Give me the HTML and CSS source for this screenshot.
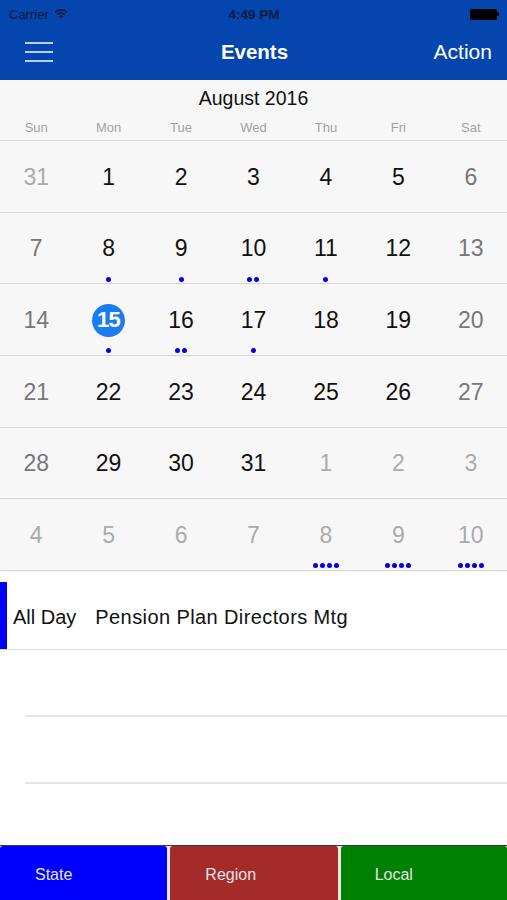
FILE: index.html
```html
<!DOCTYPE html>
<html>
<head>
<meta charset="utf-8">
<link rel="stylesheet" href="styles.css">
</head>
<body>
<div class="app">
  <header class="top">
    <div class="status">
      <div class="status-left">
        <span class="carrier">Carrier</span>
        <svg class="wifi" width="14" height="11" viewBox="0 0 14 11"><path d="M7 10.5 L4.9 8.1 A3.2 3.2 0 0 1 9.1 8.1 Z" fill="#0a1a3c"/><path d="M3.4 6.6 A5.3 5.3 0 0 1 10.6 6.6" stroke="#0a1a3c" stroke-width="1.7" fill="none"/><path d="M1.2 4.2 A8.4 8.4 0 0 1 12.8 4.2" stroke="#0a1a3c" stroke-width="1.7" fill="none"/></svg>
      </div>
      <span class="time">4:49 PM</span>
      <div class="status-right">
        <span class="battery"></span><span class="nub"></span>
      </div>
    </div>
    <nav class="navbar">
      <div class="menu">
        <span></span><span></span><span></span>
      </div>
      <div class="title">Events</div>
      <div class="action">Action</div>
    </nav>
  </header>

  <section class="calendar">
    <div class="month">August 2016</div>
    <div class="weekdays">
      <span>Sun</span><span>Mon</span><span>Tue</span><span>Wed</span><span>Thu</span><span>Fri</span><span>Sat</span>
    </div>
    <div class="grid">
      <div class="cell out"><div class="num">31</div><div class="dots"></div></div>
      <div class="cell"><div class="num">1</div><div class="dots"></div></div>
      <div class="cell"><div class="num">2</div><div class="dots"></div></div>
      <div class="cell"><div class="num">3</div><div class="dots"></div></div>
      <div class="cell"><div class="num">4</div><div class="dots"></div></div>
      <div class="cell"><div class="num">5</div><div class="dots"></div></div>
      <div class="cell we"><div class="num">6</div><div class="dots"></div></div>

      <div class="cell we"><div class="num">7</div><div class="dots"></div></div>
      <div class="cell"><div class="num">8</div><div class="dots"><i></i></div></div>
      <div class="cell"><div class="num">9</div><div class="dots"><i></i></div></div>
      <div class="cell"><div class="num">10</div><div class="dots"><i></i><i></i></div></div>
      <div class="cell"><div class="num">11</div><div class="dots"><i></i></div></div>
      <div class="cell"><div class="num">12</div><div class="dots"></div></div>
      <div class="cell we"><div class="num">13</div><div class="dots"></div></div>

      <div class="cell we"><div class="num">14</div><div class="dots"></div></div>
      <div class="cell"><div class="num"><span class="today">15</span></div><div class="dots"><i></i></div></div>
      <div class="cell"><div class="num">16</div><div class="dots"><i></i><i></i></div></div>
      <div class="cell"><div class="num">17</div><div class="dots"><i></i></div></div>
      <div class="cell"><div class="num">18</div><div class="dots"></div></div>
      <div class="cell"><div class="num">19</div><div class="dots"></div></div>
      <div class="cell we"><div class="num">20</div><div class="dots"></div></div>

      <div class="cell we"><div class="num">21</div><div class="dots"></div></div>
      <div class="cell"><div class="num">22</div><div class="dots"></div></div>
      <div class="cell"><div class="num">23</div><div class="dots"></div></div>
      <div class="cell"><div class="num">24</div><div class="dots"></div></div>
      <div class="cell"><div class="num">25</div><div class="dots"></div></div>
      <div class="cell"><div class="num">26</div><div class="dots"></div></div>
      <div class="cell we"><div class="num">27</div><div class="dots"></div></div>

      <div class="cell we"><div class="num">28</div><div class="dots"></div></div>
      <div class="cell"><div class="num">29</div><div class="dots"></div></div>
      <div class="cell"><div class="num">30</div><div class="dots"></div></div>
      <div class="cell"><div class="num">31</div><div class="dots"></div></div>
      <div class="cell out"><div class="num">1</div><div class="dots"></div></div>
      <div class="cell out"><div class="num">2</div><div class="dots"></div></div>
      <div class="cell out"><div class="num">3</div><div class="dots"></div></div>

      <div class="cell out"><div class="num">4</div><div class="dots"></div></div>
      <div class="cell out"><div class="num">5</div><div class="dots"></div></div>
      <div class="cell out"><div class="num">6</div><div class="dots"></div></div>
      <div class="cell out"><div class="num">7</div><div class="dots"></div></div>
      <div class="cell out"><div class="num">8</div><div class="dots"><i></i><i></i><i></i><i></i></div></div>
      <div class="cell out"><div class="num">9</div><div class="dots"><i></i><i></i><i></i><i></i></div></div>
      <div class="cell out"><div class="num">10</div><div class="dots"><i></i><i></i><i></i><i></i></div></div>
    </div>
  </section>

  <section class="events">
    <div class="event">
      <span class="bar"></span>
      <span class="when">All Day</span>
      <span class="what">Pension Plan Directors Mtg</span>
    </div>
    <div class="empty"></div>
    <div class="empty"></div>
  </section>

  <footer class="tabs">
    <div class="tab state">State</div>
    <div class="tab region">Region</div>
    <div class="tab local">Local</div>
  </footer>
</div>
</body>
</html>
```

FILE: styles.css
```css
* { box-sizing: border-box; }
html, body { margin: 0; padding: 0; }
body {
  font-family: "Liberation Sans", Arial, sans-serif;
  background: #ffffff;
  width: 507px;
  height: 900px;
  overflow: hidden;
}
.app {
  display: flex;
  flex-direction: column;
  height: 900px;
}
.top {
  background: #0446ad;
  height: 80px;
  display: flex;
  flex-direction: column;
}
.status {
  height: 28px;
  display: flex;
  align-items: center;
  justify-content: space-between;
  padding: 0 8px 0 9px;
  color: #0a1a3c;
  font-size: 13px;
}
.status-left {
  display: flex;
  align-items: center;
  gap: 5px;
  width: 120px;
}
.wifi { margin-top: -1px; }
.time { font-weight: bold; font-size: 13.5px; }
.status-right {
  width: 120px;
  display: flex;
  justify-content: flex-end;
  align-items: center;
}
.battery {
  width: 27px;
  height: 11px;
  background: #000;
  border-radius: 2px;
}
.nub {
  width: 2px;
  height: 4px;
  background: #000;
  border-radius: 0 1px 1px 0;
}
.navbar {
  flex: 1;
  display: flex;
  align-items: center;
  justify-content: space-between;
  padding: 0 15px 4px 25px;
  color: #fff;
}
.menu {
  width: 120px;
  display: flex;
  flex-direction: column;
  gap: 7px;
}
.menu span {
  display: block;
  width: 28px;
  height: 2px;
  background: #b9cdf0;
}
.title {
  font-size: 20.5px;
  font-weight: bold;
  margin-left: -8px;
}
.action {
  width: 120px;
  text-align: right;
  font-size: 21px;
}
.calendar {
  background: #f7f7f7;
  height: 492px;
}
.month {
  text-align: center;
  font-size: 19.5px;
  color: #111;
  padding-top: 7px;
  height: 36px;
}
.weekdays {
  display: grid;
  grid-template-columns: repeat(7, 1fr);
  text-align: center;
  font-size: 13px;
  color: #a2a2a2;
  height: 25px;
  padding-top: 4px;
  border-bottom: 1px solid #d6d6d6;
}
.grid {
  display: grid;
  grid-template-columns: repeat(7, 1fr);
  grid-auto-rows: 71.7px;
}
.cell {
  border-bottom: 1px solid #d6d6d6;
  padding-top: 21px;
  display: flex;
  flex-direction: column;
  align-items: center;
  color: #111;
}
.num {
  height: 30px;
  display: flex;
  align-items: center;
  justify-content: center;
  font-size: 23px;
}
.cell.we { color: #777; }
.cell.out { color: #ababab; }
.today {
  flex: none;
  width: 33px;
  height: 33px;
  border-radius: 50%;
  background: #1b7cf2;
  color: #fff;
  font-weight: bold;
  font-size: 22px;
  display: flex;
  align-items: center;
  justify-content: center;
  letter-spacing: -0.5px;
}
.dots {
  margin-top: 13px;
  height: 5px;
  display: flex;
  gap: 2px;
}
.dots i {
  display: block;
  width: 5px;
  height: 5px;
  border-radius: 50%;
  background: #0000e6;
}
.events {
  flex: 1;
  display: flex;
  flex-direction: column;
  background: #fff;
}
.event {
  height: 78px;
  display: flex;
  align-items: center;
  border-bottom: 1px solid #dcdcdc;
  font-size: 20px;
  color: #111;
  padding-top: 10px;
}
.event .when, .event .what { position: relative; top: 2px; }
.bar {
  align-self: stretch;
  width: 7px;
  background: #0000ff;
}
.when { margin-left: 6px; }
.what { margin-left: 19px; letter-spacing: 0.4px; }
.empty {
  height: 67px;
  margin-left: 25px;
  border-bottom: 2px solid #e6e6e6;
}
.tabs {
  margin-top: auto;
  height: 55px;
  border-top: 1px solid #3a3a3a;
  background: #e8e8e8;
  display: flex;
  gap: 3px;
}
.tab {
  flex: 1;
  display: flex;
  align-items: center;
  padding-left: 35px;
  padding-top: 3px;
  font-size: 16px;
  color: #e4e4e4;
  border-radius: 3px 3px 0 0;
}
.state { background: #0000ff; }
.region { background: #a52a2a; }
.local { background: #008000; padding-left: 34px; }
```
